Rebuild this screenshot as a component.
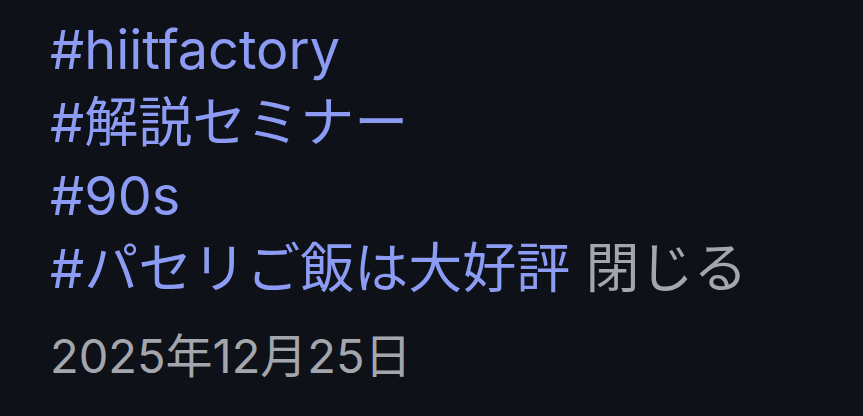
import React from "react";

const tags = ["#hiitfactory", "#解説セミナー", "#90s", "#パセリご飯は大好評"];

export default function App() {
  return (
    <div
      className="w-[863px] h-[416px] bg-[#0e1117] overflow-hidden pl-[50px] pt-[13px]"
      style={{ fontFamily: 'Inter, "Noto Sans CJK JP", sans-serif' }}
    >
      <div className="text-[54px] leading-[73px] text-[#8c9cf5]">
        {tags.map((t, i) => (
          <div key={t}>
            {t}
            {i === tags.length - 1 && (
              <span className="text-[#a3a6ad]"> 閉じる</span>
            )}
          </div>
        ))}
      </div>
      <div className="mt-[23px] text-[47px] leading-[56px] text-[#a3a6ad]">
        2025年12月25日
      </div>
    </div>
  );
}
